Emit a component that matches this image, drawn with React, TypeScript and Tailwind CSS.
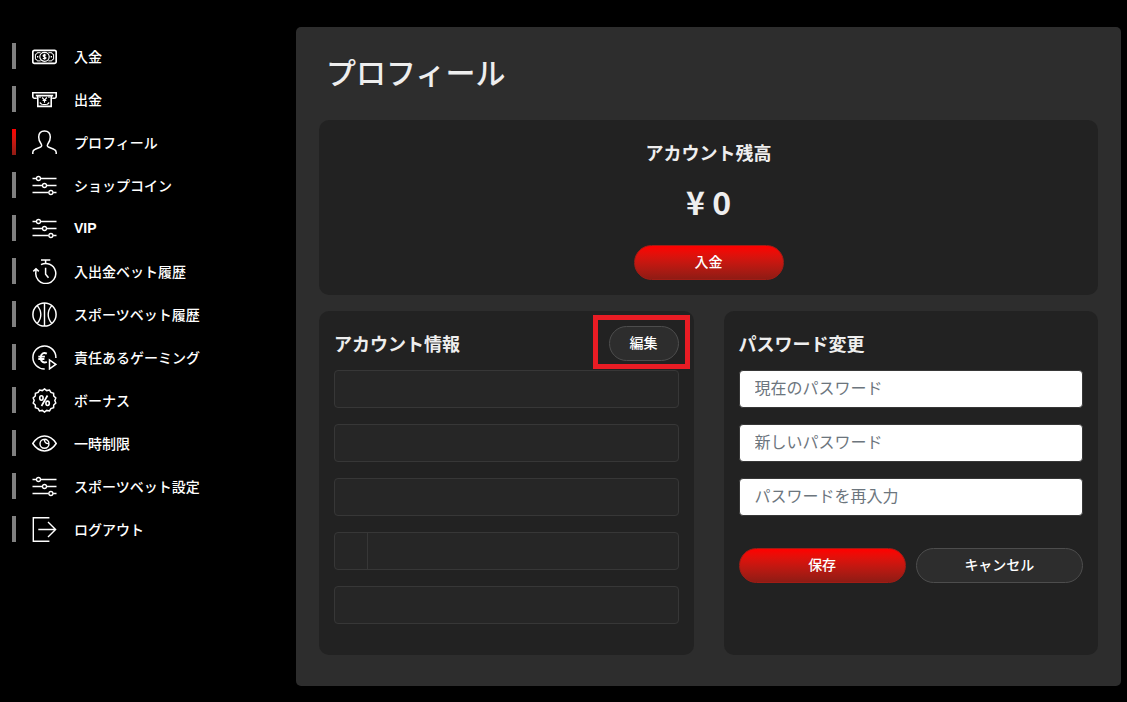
import React from 'react';

type IconName =
  | 'deposit'
  | 'withdraw'
  | 'user'
  | 'sliders'
  | 'history'
  | 'ball'
  | 'responsible'
  | 'bonus'
  | 'eye'
  | 'logout';

const MENU: { label: string; icon: IconName; active?: boolean }[] = [
  { label: '入金', icon: 'deposit' },
  { label: '出金', icon: 'withdraw' },
  { label: 'プロフィール', icon: 'user', active: true },
  { label: 'ショップコイン', icon: 'sliders' },
  { label: 'VIP', icon: 'sliders' },
  { label: '入出金ベット履歴', icon: 'history' },
  { label: 'スポーツベット履歴', icon: 'ball' },
  { label: '責任あるゲーミング', icon: 'responsible' },
  { label: 'ボーナス', icon: 'bonus' },
  { label: '一時制限', icon: 'eye' },
  { label: 'スポーツベット設定', icon: 'sliders' },
  { label: 'ログアウト', icon: 'logout' },
];

const ACCOUNT_FIELDS = [
  { id: 'name', label: '氏名' },
  { id: 'email', label: 'メールアドレス' },
  { id: 'birthday', label: '生年月日' },
  { id: 'phone', label: '電話番号', prefix: true },
  { id: 'address', label: '住所' },
];

const PASSWORD_FIELDS = [
  { id: 'current-password', label: '現在のパスワード' },
  { id: 'new-password', label: '新しいパスワード' },
  { id: 'confirm-password', label: 'パスワードを再入力' },
];

const ICONS: Record<IconName, React.ReactNode> = {
  deposit: (
    <>
      <rect x="0.8" y="6.300" width="23.4" height="13" rx="1.6" strokeWidth="1.7" />
      <path d="M8.600 8.700H5.200a1.600 1.600 0 0 1-1.800 1.600v5a1.600 1.600 0 0 1 1.800 1.600h3.400M16.400 8.700h3.400a1.600 1.600 0 0 0 1.800 1.600v5a1.600 1.600 0 0 0-1.800 1.600h-3.400" strokeWidth="1" />
      <ellipse cx="12.500" cy="12.800" rx="4.700" ry="4.500" strokeWidth="1.200" />
      <path d="M14 11.400c-.4-.7-2.800-.9-2.900.3 0 1.300 2.900.9 2.900 2.300-.1 1.200-2.600 1-3 .1M12.500 9.800v6" strokeWidth="1.200" />
      <path d="M5 12.800h1.300M18.700 12.800H20" strokeWidth="1.500" />
    </>
  ),
  withdraw: (
    <>
      <path d="M4.800 11.200H2.600a1.700 1.700 0 0 1-1.800-1.700V5.800h23.400v3.700a1.700 1.700 0 0 1-1.800 1.700h-2.200" strokeWidth="1.600" />
      <path d="M3.800 8.600h17.400M5.800 8.800v10.600h13.400V8.800" strokeWidth="1.600" />
      <path d="M8 9.300v1.600M17 9.300v1.600M7.800 15.500l2 2M17.200 15.500l-2 2M10.200 17.500h4.600" strokeWidth="1.100" />
      <path d="M10.200 10.500l2.300 2.600 2.300-2.600M12.500 13.100v2.700M10.600 13.500h3.800" strokeWidth="1.200" />
    </>
  ),
  user: (
    <path
      d="M.8 24v-1.800c0-1.500 1-2.500 2.400-3l4.900-1.900c1.500-.6 2-1.800 1.200-3C7.800 12.300 6.600 9.900 6.700 7 6.800 3 9.100 1 12.500 1s5.700 2 5.800 6c.1 2.900-1.100 5.300-2.600 7.300-.8 1.200-.3 2.400 1.200 3l4.900 1.900c1.400.5 2.400 1.500 2.400 3V24"
      strokeWidth="1.5"
    />
  ),
  sliders: (
    <>
      <path d="M.5 5.500H4.300M8.700 5.500H24.500M.5 12.500H10.200M14.700 12.500H24.500M.5 19.500H16.700M21.100 19.500H24.500" strokeWidth="1.400" />
      <circle cx="6.500" cy="5.500" r="2" strokeWidth="1.300" />
      <circle cx="12.500" cy="12.500" r="2" strokeWidth="1.300" />
      <circle cx="18.900" cy="19.500" r="2" strokeWidth="1.300" />
    </>
  ),
  history: (
    <>
      <path d="M9 1h9.300M13.600 1v3.800" strokeWidth="1.500" />
      <path d="M9 5.700A10 10 0 1 1 3.900 12.800L4 10.200M1.300 12.400 4 9.800 6.800 12.400" strokeWidth="1.500" />
      <path d="M13.600 8.800v6.400l2.900 3.600" strokeWidth="1.500" />
    </>
  ),
  ball: (
    <>
      <circle cx="12.500" cy="12.500" r="11.600" strokeWidth="1.500" />
      <path d="M12.500 1v23M5.200 3.600c4.800 5.400 4.800 12.400 0 17.800M19.800 3.600c-4.800 5.400-4.800 12.400 0 17.800" strokeWidth="1.400" />
    </>
  ),
  responsible: (
    <>
      <path d="M12.700 24A11.500 11.500 0 1 1 23.900 13" strokeWidth="1.500" />
      <path d="M14.800 8.700c-3-1.700-6.100-.1-6.100 4s3.100 5.800 6.100 4.100M6.300 11.600h6.600M6.300 14h6.100" strokeWidth="1.900" />
      <path d="M17.500 14.900v9l6.300-4.500z" strokeWidth="1.500" />
    </>
  ),
  bonus: (
    <>
      <path
        d="M12.500.9l2.200 1.700 2.800-.6 1.400 2.400 2.700.8.100 2.800 2.100 1.900-1 2.600 1 2.600-2.100 1.900-.1 2.800-2.700.8-1.400 2.400-2.800-.6-2.200 1.700-2.200-1.700-2.800.6-1.400-2.400-2.700-.8-.1-2.800-2.100-1.900 1-2.600-1-2.600 2.100-1.900.1-2.800 2.700-.8L7.500 2l2.800.6z"
        strokeWidth="1.500"
      />
      <path d="M15.500 7.500l-6 10.500" strokeWidth="1.700" />
      <ellipse cx="9.400" cy="10" rx="1.700" ry="2.200" strokeWidth="1.600" />
      <ellipse cx="15.600" cy="15.300" rx="1.700" ry="2.200" strokeWidth="1.600" />
    </>
  ),
  eye: (
    <>
      <path d="M.8 12.500C4 7.600 8 5.100 12.500 5.100s8.500 2.500 11.700 7.400c-3.200 4.900-7.200 7.400-11.700 7.400S4 17.400.8 12.500z" strokeWidth="1.500" />
      <path d="M12.500 8.200a4.500 4.500 0 1 0 4.500 4.500M12.500 8.200c-.6 2.600 1.500 4.800 4.500 4.300M12.500 8.200a4.500 4.500 0 0 1 4.500 4.300" strokeWidth="1.400" />
    </>
  ),
  logout: (
    <path d="M17.400.8H1.300v23.400h16.100M6.300 12.500h17M16 5l7.600 7.500L16 20" strokeWidth="1.400" />
  ),
};

function MenuIcon({ name }: { name: IconName }) {
  return (
    <svg viewBox="0 0 25 25" fill="none" stroke="currentColor" className="size-[25px] shrink-0" aria-hidden="true">
      {ICONS[name]}
    </svg>
  );
}

function Button({ children, variant, className = '' }: { children: React.ReactNode; variant: 'red' | 'dark'; className?: string }) {
  const look =
    variant === 'red'
      ? 'border-[#a01c15] bg-gradient-to-b from-[#ff0000] to-[#8f1b14]'
      : 'border-[#4d4d4d] bg-[#2d2d2d]';
  return (
    <button type="button" className={`h-[35px] rounded-full border pb-1 text-sm font-medium text-white ${look} ${className}`}>
      {children}
    </button>
  );
}

function Sidebar() {
  return (
    <nav className="w-[296px] shrink-0 pt-[43px] pl-3">
      <ul className="flex flex-col gap-[17px]">
        {MENU.map((item) => (
          <li key={item.label}>
            <a href="#" className="flex h-[26px] items-center text-sm font-medium text-white" aria-current={item.active ? 'page' : undefined}>
              <span className={`mr-4 h-full w-1 ${item.active ? 'bg-gradient-to-b from-[#ff0000] to-[#8f1b14]' : 'bg-[#808080]'}`} />
              <MenuIcon name={item.icon} />
              <span className={`ml-[17px] ${item.label === 'VIP' ? "font-['Liberation_Sans','Noto_Sans_CJK_JP',sans-serif] font-bold" : ''}`}>
                {item.label}
              </span>
            </a>
          </li>
        ))}
      </ul>
    </nav>
  );
}

export default function App() {
  return (
    <div className="flex min-h-screen bg-black font-['Noto_Sans_CJK_JP',sans-serif] text-[#eeeeee]">
      <Sidebar />

      <main className="mt-[27px] mr-1.5 mb-4 flex-1 rounded-[5px] bg-[#2d2d2d] pr-[23px] pb-[31px] pl-[23px]">
        <h1 className="flex h-[93px] items-center pb-1 pl-[7px] text-[30px] font-medium">プロフィール</h1>

        {/* 残高 */}
        <section className="flex h-[175px] flex-col items-center rounded-[10px] bg-[#222222] pt-[19px]">
          <h2 className="text-lg leading-[26px] font-bold">アカウント残高</h2>
          <p className="mt-3 text-[32px] leading-[48px] font-bold">¥ 0</p>
          <Button variant="red" className="mt-5 w-[150px]">
            入金
          </Button>
        </section>

        <div className="mt-4 grid grid-cols-2 gap-[30px]">
          {/* アカウント情報 */}
          <section className="rounded-[10px] bg-[#222222] px-[15px] pt-[15px] pb-[31px]">
            <div className="mb-[9px] flex h-[35px] items-center justify-between">
              <h2 className="pb-0.5 text-lg font-bold">アカウント情報</h2>
              <div className="relative">
                <Button variant="dark" className="w-[70px]">
                  編集
                </Button>
                <span className="pointer-events-none absolute -top-[11px] -right-[11px] -bottom-2 -left-4 border-[5px] border-[#e91c24]" />
              </div>
            </div>
            <div className="flex flex-col gap-4">
              {ACCOUNT_FIELDS.map((field) => (
                <div key={field.id} className="flex h-[38px] overflow-hidden rounded border border-[#373737] bg-[#262626]">
                  {field.prefix && <span className="w-[33px] shrink-0 border-r border-[#373737]" />}
                  <input id={field.id} aria-label={field.label} readOnly className="min-w-0 flex-1 px-3 text-base outline-none" />
                </div>
              ))}
            </div>
          </section>

          {/* パスワード変更 */}
          <section className="rounded-[10px] bg-[#222222] px-[15px] pt-[15px] pb-[31px]">
            <h2 className="mb-[9px] flex h-[35px] items-center pb-0.5 text-lg font-bold">パスワード変更</h2>
            <form className="flex flex-col gap-4">
              {PASSWORD_FIELDS.map((field) => (
                <input
                  key={field.id}
                  id={field.id}
                  type="password"
                  aria-label={field.label}
                  placeholder={field.label}
                  className="h-[38px] w-full rounded border border-[#373737] bg-white px-[15px] pb-1 text-base text-black outline-none placeholder:text-[#6c757d]"
                />
              ))}
              <div className="mt-4 grid grid-cols-2 gap-2.5">
                <Button variant="red">保存</Button>
                <Button variant="dark">キャンセル</Button>
              </div>
            </form>
          </section>
        </div>
      </main>
    </div>
  );
}
